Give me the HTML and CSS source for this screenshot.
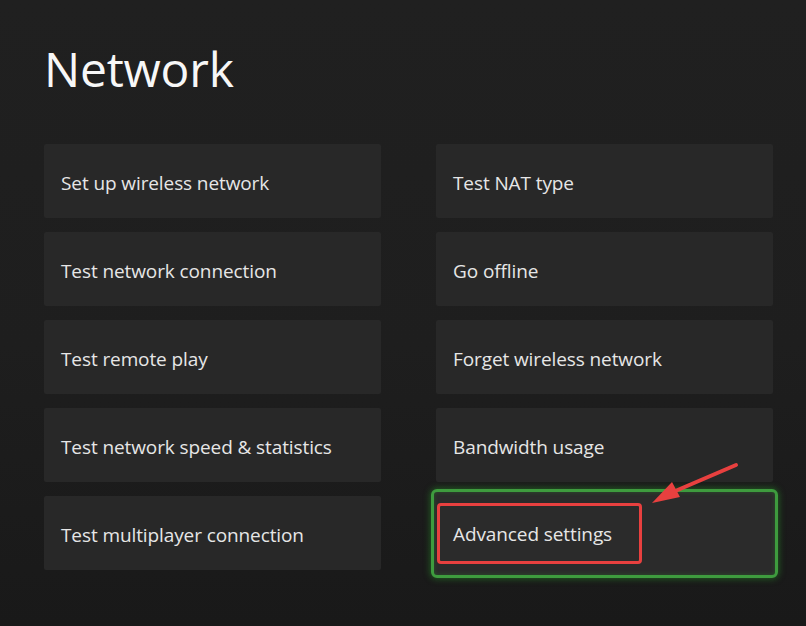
FILE: index.html
```html
<!DOCTYPE html>
<html lang="en">
<head>
<meta charset="utf-8">
<title>Network</title>
<link rel="stylesheet" href="styles.css">
</head>
<body>
<main class="page">
  <h1 class="title">Network</h1>
  <div class="grid">
    <div class="tile">Set up wireless network</div>
    <div class="tile">Test NAT type</div>
    <div class="tile">Test network connection</div>
    <div class="tile">Go offline</div>
    <div class="tile">Test remote play</div>
    <div class="tile">Forget wireless network</div>
    <div class="tile">Test network speed &amp; statistics</div>
    <div class="tile">Bandwidth usage</div>
    <div class="tile">Test multiplayer connection</div>
    <div class="tile focused">
      <span class="label">Advanced settings</span>
      <span class="callout"></span>
    </div>
  </div>
  <svg class="arrow" width="110" height="50" viewBox="0 0 110 50" aria-hidden="true">
    <line x1="96" y1="6" x2="26" y2="36" stroke="#e8403f" stroke-width="4" stroke-linecap="round"/>
    <polygon points="12,44 32,23 40,38" fill="#e8403f"/>
  </svg>
</main>
</body>
</html>
```
FILE: styles.css
```css
html, body {
  margin: 0;
  padding: 0;
}
body {
  width: 806px;
  height: 626px;
  overflow: hidden;
  background: linear-gradient(to bottom, #202020 0%, #1e1e1e 55%, #191919 100%);
  font-family: "Open Sans", "Noto Sans", "Liberation Sans", sans-serif;
  color: #e4e4e4;
}
.page {
  position: relative;
  padding: 36px 0 0 44px;
}
.title {
  margin: 0 0 42px 0;
  font-size: 48px;
  font-weight: 400;
  line-height: 66px;
  color: #f7f7f7;
  letter-spacing: -0.2px;
}
.grid {
  display: grid;
  grid-template-columns: 337px 337px;
  grid-auto-rows: 74px;
  column-gap: 55px;
  row-gap: 14px;
}
.tile {
  background: #282828;
  border-radius: 2px;
  display: flex;
  align-items: center;
  padding: 4px 0 0 17px;
  font-size: 19px;
  color: #e6e6e6;
  letter-spacing: -0.1px;
}
.focused {
  position: relative;
  margin: -7px -5px -8px -5px;
  padding: 0 0 0 19px;
  background: #2b2b2b;
  border: 3px solid #3e9b3e;
  border-radius: 6px;
  box-shadow: 0 0 6px 1px rgba(40, 140, 40, 0.55), inset 0 0 4px rgba(40, 140, 40, 0.4);
}
.label {
  position: relative;
  top: 0;
}
.callout {
  position: absolute;
  left: 3px;
  top: 11px;
  width: 199px;
  height: 55px;
  border: 3px solid #e8403f;
  border-radius: 4px;
}
.arrow {
  position: absolute;
  left: 640px;
  top: 459px;
}
```
